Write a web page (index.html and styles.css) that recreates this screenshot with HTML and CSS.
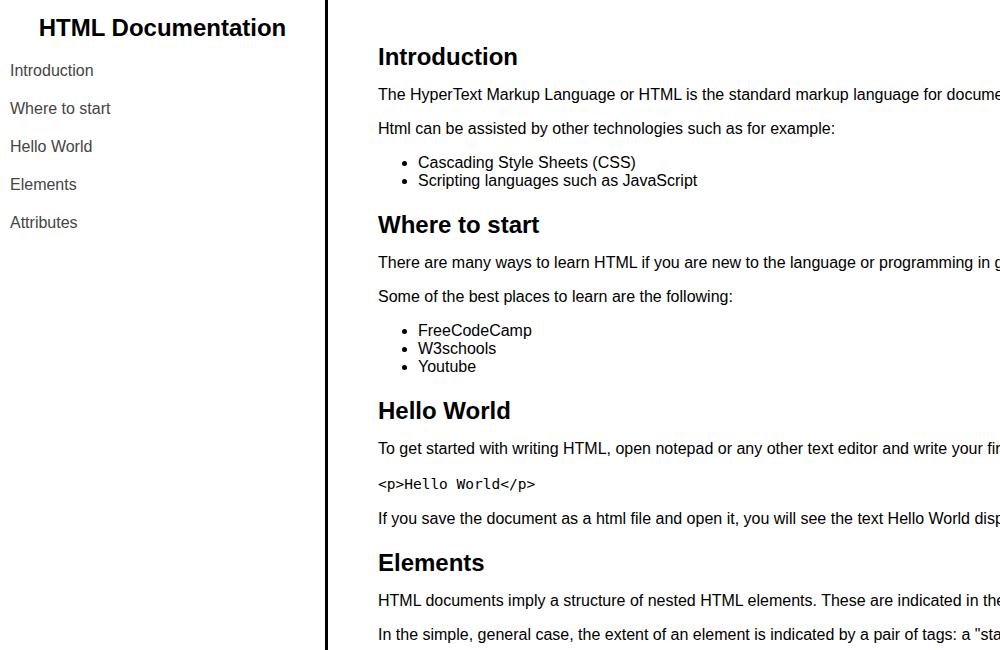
FILE: index.html
```html
<!DOCTYPE html>
<html lang="en">
<head>
<meta charset="utf-8">
<title>HTML Documentation</title>
<link rel="stylesheet" href="styles.css">
</head>
<body>
<div class="page">
  <nav class="navbar" id="navbar">
    <header class="nav-title">HTML Documentation</header>
    <a class="nav-link" href="#Introduction">Introduction</a>
    <a class="nav-link" href="#Where_to_start">Where to start</a>
    <a class="nav-link" href="#Hello_World">Hello World</a>
    <a class="nav-link" href="#Elements">Elements</a>
    <a class="nav-link" href="#Attributes">Attributes</a>
  </nav>
  <main class="main-doc" id="main-doc">
    <section class="main-section" id="Introduction">
      <h2 class="sec-title">Introduction</h2>
      <p>The HyperText Markup Language or HTML is the standard markup language for documents designed to be displayed in a web browser.</p>
      <p>Html can be assisted by other technologies such as for example:</p>
      <ul>
        <li>Cascading Style Sheets (CSS)</li>
        <li>Scripting languages such as JavaScript</li>
      </ul>
    </section>
    <section class="main-section" id="Where_to_start">
      <h2 class="sec-title">Where to start</h2>
      <p>There are many ways to learn HTML if you are new to the language or programming in general.</p>
      <p>Some of the best places to learn are the following:</p>
      <ul>
        <li>FreeCodeCamp</li>
        <li>W3schools</li>
        <li>Youtube</li>
      </ul>
    </section>
    <section class="main-section" id="Hello_World">
      <h2 class="sec-title">Hello World</h2>
      <p>To get started with writing HTML, open notepad or any other text editor and write your first line of code:</p>
      <p class="code-line"><code class="code">&lt;p&gt;Hello World&lt;/p&gt;</code></p>
      <p>If you save the document as a html file and open it, you will see the text Hello World displayed in your browser.</p>
    </section>
    <section class="main-section" id="Elements">
      <h2 class="sec-title">Elements</h2>
      <p>HTML documents imply a structure of nested HTML elements. These are indicated in the document by HTML tags, enclosed in angle brackets.</p>
      <p>In the simple, general case, the extent of an element is indicated by a pair of tags: a "start tag" &lt;p&gt; and "end tag" &lt;/p&gt;.</p>
    </section>
    <section class="main-section" id="Attributes">
      <h2 class="sec-title">Attributes</h2>
      <p>Most of the attributes of an element are name-value pairs, separated by = and written within the start tag of an element after the element's name.</p>
    </section>
  </main>
</div>
</body>
</html>
```
FILE: styles.css
```css
html, body {
  margin: 0;
  padding: 0;
  background: #ffffff;
  overflow: hidden;
}

body {
  font-family: "Liberation Sans", Arial, sans-serif;
  font-size: 16px;
  color: #000000;
}

.page {
  display: flex;
  height: 650px;
}

.navbar {
  flex: 0 0 325px;
  width: 325px;
  border-right: 3px solid #000000;
  display: flex;
  flex-direction: column;
}

.nav-title {
  font-size: 24px;
  font-weight: bold;
  text-align: center;
  padding: 14px 0 0;
  height: 38px;
  line-height: 28px;
}

.nav-link {
  display: block;
  padding: 10px 10px;
  line-height: 18px;
  color: #444444;
  text-decoration: none;
}

.main-doc {
  flex: 1 1 auto;
  min-width: 0;
  padding: 22px 0 0 50px;
  white-space: nowrap;
  overflow: hidden;
}

.sec-title {
  font-size: 24px;
  font-weight: bold;
  line-height: 26px;
  margin: 22px 0 0;
}

.main-section p {
  margin: 16px 0;
  line-height: 18px;
}

.main-section .code-line {
  line-height: 20px;
}

.main-section ul {
  margin: 16px 0;
  padding-left: 40px;
  line-height: 18px;
}

.code {
  font-family: "DejaVu Sans Mono", "Liberation Mono", monospace;
  font-size: 14.5px;
  color: #000000;
}
```
